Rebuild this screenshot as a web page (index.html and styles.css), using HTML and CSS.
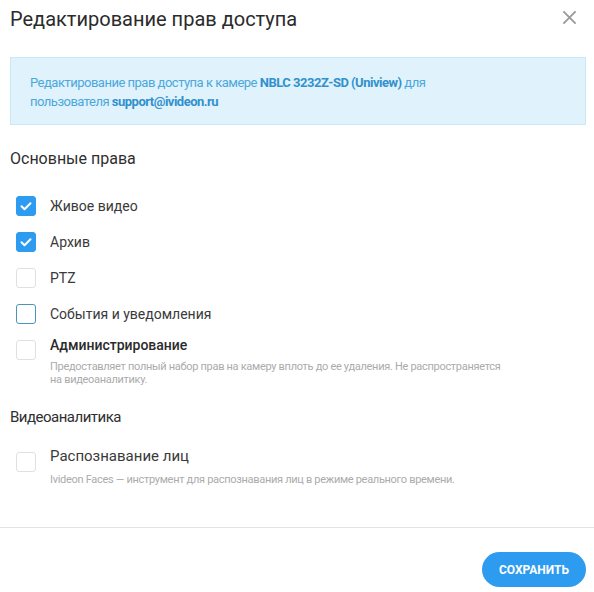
FILE: index.html
```html
<!DOCTYPE html>
<html lang="ru">
<head>
<meta charset="utf-8">
<link rel="stylesheet" href="styles.css">
</head>
<body>
<div class="modal">
  <header class="head">
    <h1 class="title">Редактирование прав доступа</h1>
    <button class="close" aria-label="Закрыть">
      <svg width="16" height="16" viewBox="0 0 16 16"><path d="M1.5 1.5L14.5 14.5M14.5 1.5L1.5 14.5" stroke="#9a9a9a" stroke-width="2" fill="none"/></svg>
    </button>
  </header>
  <div class="info">
    <p class="info-text"><span class="line">Редактирование прав доступа к камере <b>NBLC 3232Z-SD (Uniview)</b> для</span><span class="line">пользователя <b>support@ivideon.ru</b></span></p>
  </div>
  <section class="group first">
    <h2 class="group-title">Основные права</h2>
    <div class="list">
      <label class="row"><span class="box checked"><svg viewBox="0 0 20 20"><path d="M5.5 10.2l3 3 6-6" stroke="#fff" stroke-width="2" fill="none" stroke-linecap="round" stroke-linejoin="round"/></svg></span><span class="label">Живое видео</span></label>
      <label class="row"><span class="box checked"><svg viewBox="0 0 20 20"><path d="M5.5 10.2l3 3 6-6" stroke="#fff" stroke-width="2" fill="none" stroke-linecap="round" stroke-linejoin="round"/></svg></span><span class="label">Архив</span></label>
      <label class="row"><span class="box"></span><span class="label">PTZ</span></label>
      <label class="row"><span class="box focus"></span><span class="label">События и уведомления</span></label>
      <label class="row tall"><span class="box"></span><span class="text admin"><span class="label strong">Администрирование</span><span class="desc">Предоставляет полный набор прав на камеру вплоть до ее удаления. Не распространяется на видеоаналитику.</span></span></label>
    </div>
  </section>
  <section class="group second">
    <h2 class="group-title narrow">Видеоаналитика</h2>
    <div class="list">
      <label class="row tall"><span class="box"></span><span class="text faces"><span class="label big">Распознавание лиц</span><span class="desc">Ivideon Faces — инструмент для распознавания лиц в режиме реального времени.</span></span></label>
    </div>
  </section>
  <footer class="foot">
    <button class="save">СОХРАНИТЬ</button>
  </footer>
</div>
</body>
</html>
```
FILE: styles.css
```css
html, body {
  margin: 0;
  padding: 0;
  background: #fff;
}
body {
  font-family: Roboto, "Noto Sans", sans-serif;
  color: #333;
}
.modal {
  width: 594px;
  height: 592px;
  display: flex;
  flex-direction: column;
}
.head {
  display: flex;
  align-items: center;
  justify-content: space-between;
  padding: 4px 17px 0 10px;
  height: 30px;
}
.title {
  margin: 0;
  font-size: 20px;
  font-weight: 400;
  color: #2b2b2b;
}
.close {
  border: 0;
  background: none;
  padding: 0;
  width: 15px;
  height: 15px;
  display: flex;
  margin-top: -3px;
}
.close svg { width: 15px; height: 15px; }
.info {
  margin: 23px 8px 0 10px;
  height: 68px;
  box-sizing: border-box;
  background: #e0f2fb;
  border: 1px solid #cbe8f6;
  padding: 15px 20px 0 19px;
}
.info-text {
  margin: 0;
  display: flex;
  flex-direction: column;
  font-size: 13px;
  letter-spacing: -0.5px;
  line-height: 19px;
  color: #4aa8dd;
}
.info-text .line { white-space: nowrap; }
.info-text b {
  font-weight: 700;
  color: #3191cd;
}
.group {
  padding: 0 10px;
}
.group-title {
  margin: 0;
  font-size: 16px;
  font-weight: 400;
  color: #2f2f2f;
  line-height: 20px;
}
.group-title.narrow {
  font-size: 15px;
  letter-spacing: -0.5px;
}
.first .group-title { margin-top: 24px; }
.second .group-title { margin-top: 21px; }
.list {
  display: flex;
  flex-direction: column;
  gap: 16px;
  padding: 27px 0 0 6px;
}
.second .list { padding-top: 25px; }
.row {
  display: flex;
  align-items: center;
  gap: 14px;
  height: 20px;
  font-size: 14px;
}
.row.tall {
  align-items: flex-start;
  height: auto;
}
.box {
  width: 20px;
  height: 20px;
  box-sizing: border-box;
  border: 1px solid #e0e0e0;
  border-radius: 3px;
  flex: none;
  display: flex;
}
.box svg { width: 20px; height: 20px; }
.box.checked {
  background: #2d9cf0;
  border-color: #2d9cf0;
}
.box.checked svg { margin: -1px; }
.box.focus {
  border: 1.5px solid #4d94bd;
}
.label {
  color: #3a3a3a;
  line-height: 20px;
}
.label.strong { font-weight: 500; color: #2b2b2b; }
.label.big { font-size: 15px; }
.text {
  display: flex;
  flex-direction: column;
}
.text .label { line-height: 16px; }
.text.admin { margin-top: -3px; }
.text.faces { margin-top: -4px; }
.desc {
  font-size: 11px;
  letter-spacing: -0.3px;
  color: #ababab;
  line-height: 13px;
  margin-top: 7px;
  max-width: 452px;
}
.faces .desc { margin-top: 9px; }
.foot {
  margin-top: auto;
  border-top: 1px solid #e3e3e3;
  height: 65px;
  display: flex;
  justify-content: flex-end;
  align-items: flex-start;
  padding: 24px 8px 0 0;
  box-sizing: border-box;
}
.save {
  border: 0;
  background: #2d9cf0;
  color: #fff;
  font-family: Roboto, sans-serif;
  font-weight: 700;
  font-size: 12px;
  height: 35px;
  width: 104px;
  border-radius: 18px;
  padding: 0;
}
```
